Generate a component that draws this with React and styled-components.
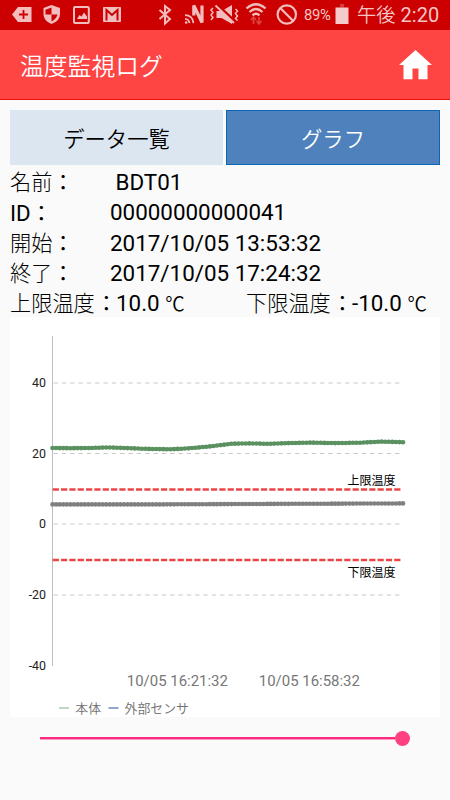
import React from 'react';
import styled, { createGlobalStyle } from 'styled-components';

const GlobalStyle = createGlobalStyle`
  body { margin: 0; background: #fafafa; }
  * { box-sizing: border-box; }
`;

const Screen = styled.div`
  width: 450px;
  height: 800px;
  overflow: hidden;
  background: #fafafa;
  color: #000;
  font-family: Roboto, 'Noto Sans CJK JP', sans-serif;
`;

const StatusBar = styled.div`
  height: 30px;
  background: #cc0000;
  color: #f5c6c6;
  display: flex;
  align-items: center;
  padding-left: 12px;
`;

const StatusIcon = styled.svg`
  display: block;
  flex: none;
  width: ${p => p.$w}px;
  height: 30px;
  margin-right: ${p => p.$gap}px;
  overflow: visible;
`;

const Battery = styled.span`
  width: 32px;
  font-size: 14.8px;
  line-height: 30px;
  letter-spacing: -0.3px;
  white-space: nowrap;
`;

const Clock = styled.span`
  display: flex;
  gap: 5px;
  font-size: 20px;
  line-height: 33px;
  white-space: nowrap;
`;

const Meridiem = styled.span`
  font-size: 19.3px;
  font-weight: 350;
`;

const AppBar = styled.header`
  height: 70px;
  background: #ff4444;
  border-bottom: 1px solid #f01010;
  display: flex;
  align-items: center;
  justify-content: space-between;
  padding: 0 18px 0 20px;
`;

const Title = styled.h1`
  margin: 4px 0 0;
  color: #fff;
  font-weight: 350;
  font-size: 23.8px;
  line-height: 34px;
`;

const HomeIcon = styled.svg`
  width: 33px;
  height: 30px;
  display: block;
`;

const Tabs = styled.div`
  display: flex;
  gap: 3px;
  padding: 10px 10px 0;
`;

const Tab = styled.button`
  width: ${p => (p.$active ? 214 : 213)}px;
  height: 55px;
  padding: 0 0 1px;
  border: ${p => (p.$active ? '1px solid #0b66b5' : '0')};
  background: ${p => (p.$active ? '#4f81bd' : '#dce6f1')};
  color: ${p => (p.$active ? '#fff' : '#000')};
  font-family: inherit;
  font-size: 21.3px;
  font-weight: 350;
`;

const Details = styled.dl`
  margin: 0;
  padding: 1px 10px 0;
`;

const DetailRow = styled.div`
  display: flex;
  height: 30.3px;
  line-height: 34px;
  font-size: 21.2px;
  white-space: nowrap;
`;

const Label = styled.dt`
  width: ${p => p.$w}px;
  flex: none;
  font-weight: 300;
`;

const Latin = styled.span`
  font-size: 22.3px;
  font-weight: 400;
`;

const Colon = styled.span`
  font-weight: 400;
  margin-left: ${p => p.$shift || 0}px;
`;

const Value = styled.dd`
  margin: 0;
  line-height: 32px;
  padding-left: ${p => p.$indent || 0}px;
  font-size: 22.4px;
`;

const LimitGroup = styled.div`
  display: flex;
  width: ${p => p.$w}px;
  flex: none;
`;

const Unit = styled.span`
  font-size: 19.5px;
  font-weight: 350;
`;

const ChartPanel = styled.section`
  width: 430px;
  height: 400px;
  margin: 0 10px;
  background: #fff;
`;

const ChartSvg = styled.svg`
  display: block;
  font-family: Roboto, 'Noto Sans CJK JP', sans-serif;
`;

const AxisText = styled.text`
  font-size: 12.4px;
  text-anchor: end;
  fill: #222;
`;

const TimeText = styled.text`
  font-size: 14.95px;
  fill: #777;
`;

const LimitText = styled.text`
  font-size: 12px;
  fill: #000;
`;

const LegendText = styled.text`
  font-size: 12.9px;
  font-weight: 350;
  fill: #707070;
`;

const Slider = styled.div`
  display: flex;
  align-items: center;
  width: 370px;
  height: 15px;
  margin: 14px 0 0 40px;
`;

const Track = styled.div`
  flex: 1;
  height: 3px;
  background: #ff2a80;
  border-bottom: 1px solid #ff9cc4;
`;

const Thumb = styled.div`
  width: 15px;
  height: 15px;
  border-radius: 50%;
  background: #ff4081;
`;

const ticks = [[40, 66], [20, 136.5], [0, 207], [-20, 278], [-40, 348.5]];

const outerCurve = [
  [42.5, 131], [60, 131.2], [80, 131], [98, 130.4], [112, 130.9], [135, 131.8],
  [160, 132.3], [178, 131.4], [200, 129.4], [222, 126.7], [240, 126.4],
  [258, 126.8], [275, 126.2], [300, 125.6], [325, 126.1], [350, 125.7],
  [372, 124.6], [393, 125.2],
];

const innerCurve = [[42.5, 187.4], [150, 187.4], [260, 186.9], [393, 186.4]];

function sample(curve) {
  const out = [];
  let s = 0;
  for (let i = 0; i <= 98; i += 1) {
    const x = 42.5 + i * (350.5 / 98);
    while (s < curve.length - 2 && x > curve[s + 1][0]) s += 1;
    const [x0, y0] = curve[s];
    const [x1, y1] = curve[s + 1];
    out.push([x, y0 + ((x - x0) / (x1 - x0)) * (y1 - y0)]);
  }
  return out;
}

function Series({ curve, color, dot }) {
  const pts = sample(curve);
  return (
    <g>
      <polyline points={pts.map(p => p.join(',')).join(' ')} fill="none" stroke={color} strokeWidth="3" />
      {pts.map(([x, y]) => <circle key={x} cx={x} cy={y} r="2.3" fill={dot} />)}
    </g>
  );
}

function Chart() {
  return (
    <ChartSvg width="430" height="400" viewBox="0 0 430 400">
      {ticks.map(([v, y]) => (
        <g key={v}>
          {v !== -40 && <line x1="43.5" x2="390.5" y1={y} y2={y} stroke="#c9c9c9" strokeWidth="1" strokeDasharray="4.4 3.93" />}
          <AxisText x="36" y={y + 4}>{v}</AxisText>
        </g>
      ))}
      <line x1="42.5" x2="42.5" y1="19" y2="349" stroke="#bdbdbd" />
      {[172.4, 243].map(y => (
        <line key={y} x1="42.7" x2="390.5" y1={y} y2={y} stroke="#ec4545" strokeWidth="2.5" strokeDasharray="6.2 2.13" />
      ))}
      <Series curve={outerCurve} color="#5f9364" dot="#5b9160" />
      <Series curve={innerCurve} color="#808080" dot="#808080" />
      <LimitText x="337.5" y="168.3">上限温度</LimitText>
      <LimitText x="337.5" y="260">下限温度</LimitText>
      <TimeText x="116.8" y="368.5">10/05 16:21:32</TimeText>
      <TimeText x="248.8" y="368.5">10/05 16:58:32</TimeText>
      <line x1="49" x2="59" y1="391" y2="391" stroke="#9fc2a3" strokeWidth="1.3" />
      <LegendText x="65.3" y="396">本体</LegendText>
      <line x1="98.5" x2="108.5" y1="391" y2="391" stroke="#5577ad" strokeWidth="1.3" />
      <LegendText x="114.5" y="396">外部センサ</LegendText>
    </ChartSvg>
  );
}

function StatusIcons() {
  const tint = '#f3bdbd';
  return (
    <>
      <StatusIcon $w={21} $gap={11} viewBox="0 0 21 30">
        <path d="M0 14.5 6 7h13.5v15H6z" fill={tint} />
        <path d="M11.5 10v9M7 14.5h9" stroke="#c00" strokeWidth="1.8" />
      </StatusIcon>
      <StatusIcon $w={17} $gap={13} viewBox="0 0 17 30">
        <path d="M7.5 5 16 8v6q0 7-8.5 10Q-.5 21-.5 14V8z" fill={tint} />
        <path d="M7.5 7.5v7h-6V9.7zM7.5 14.5v7q4.5-2 6-7z" fill="#c00" />
      </StatusIcon>
      <StatusIcon $w={17} $gap={13} viewBox="0 0 17 30">
        <rect x="0" y="7" width="14.8" height="16" rx="1" fill="none" stroke={tint} strokeWidth="2" />
        <path d="m3 19 2.5-4 2 1.5 2.5-4 3 4V19z" fill={tint} />
      </StatusIcon>
      <StatusIcon $w={18} $gap={37} viewBox="0 0 18 30">
        <rect x="-1" y="7" width="18" height="15" rx="1" fill={tint} />
        <path d="M2.5 20.5V10l5.5 5 5.5-5v10.5" fill="none" stroke="#c00" strokeWidth="2" />
      </StatusIcon>
      <StatusIcon $w={14} $gap={12} viewBox="0 0 14 30">
        <path d="m.5 10 10.5 9-5 4.5V6l5 4-10.5 9" fill="none" stroke={tint} strokeWidth="2" />
      </StatusIcon>
      <StatusIcon $w={20} $gap={6} viewBox="0 0 20 30">
        <path d="M8.8 15.5V5.5L17 22.500V5.500" fill="none" stroke={tint} strokeWidth="3.2" strokeLinejoin="bevel" />
        <path d="M0 15.200q7.500 0 8.500 8M0 19q4 0 4.500 4.200" fill="none" stroke={tint} strokeWidth="1.700" />
        <circle cx="1.200" cy="22.500" r="1.300" fill={tint} />
      </StatusIcon>
      <StatusIcon $w={30} $gap={6} viewBox="0 0 30 30">
        <path d="M5.5 11h5L21 5v19l-10.500-6h-5z" fill={tint} />
        <path d="m6 4.500 18 17" stroke="#c00" strokeWidth="3" />
        <path d="m4.500 5.500 18.500 17.500" stroke={tint} strokeWidth="1.9" />
        <path d="M2 8 0 10l2 2.500L0 15l2 2.500L0 20M24.500 9l2 2-2 2.500 2 2.500-2 2.500 2 2" fill="none" stroke={tint} strokeWidth="1.5" />
      </StatusIcon>
      <StatusIcon $w={21} $gap={9} viewBox="0 0 21 30">
        <path d="M-.5 8.500q9.500-8.500 19 0M2.500 12q6.500-6 13 0M5.500 15.300q3.500-3 7 0" fill="none" stroke={tint} strokeWidth="2.3" />
        <path d="M6.500 24v-7m-2.500 3 2.500-3 2.500 3M12 17v7m-2.500-3 2.500 3 2.500-3" fill="none" stroke="#e04040" strokeWidth="1.7" />
      </StatusIcon>
      <StatusIcon $w={22} $gap={5} viewBox="0 0 22 30">
        <circle cx="9.800" cy="14.500" r="9.200" fill="none" stroke={tint} strokeWidth="2.2" />
        <path d="m3.300 8 13 13" stroke={tint} strokeWidth="2.2" />
      </StatusIcon>
      <Battery>89%</Battery>
      <StatusIcon $w={14} $gap={7} viewBox="0 0 14 30">
        <path d="M4 4h4v3.500H4z" fill="#d84040" />
        <path d="M-.5 7.500h13V24h-13z" fill="#f5caca" />
      </StatusIcon>
    </>
  );
}

export default function App() {
  return (
    <Screen>
      <GlobalStyle />
      <StatusBar>
        <StatusIcons />
        <Clock><Meridiem>午後</Meridiem><span>2:20</span></Clock>
      </StatusBar>
      <AppBar>
        <Title>温度監視ログ</Title>
        <HomeIcon viewBox="0 0 33 30">
          <path d="M16.500 0 33 15h-4.500v14.300h-9V18.500h-6v10.800H4.500V15H0z" fill="#fff" />
        </HomeIcon>
      </AppBar>
      <Tabs>
        <Tab>データ一覧</Tab>
        <Tab $active>グラフ</Tab>
      </Tabs>
      <Details>
        <DetailRow><Label $w={100}>名前<Colon>：</Colon></Label><Value $indent={5.5}>BDT01</Value></DetailRow>
        <DetailRow><Label $w={100}><Latin>ID</Latin><Colon>：</Colon></Label><Value>00000000000041</Value></DetailRow>
        <DetailRow><Label $w={100}>開始<Colon>：</Colon></Label><Value>2017/10/05 13:53:32</Value></DetailRow>
        <DetailRow><Label $w={100}>終了<Colon>：</Colon></Label><Value>2017/10/05 17:24:32</Value></DetailRow>
        <DetailRow>
          <LimitGroup $w={236}>
            <Label $w={106}>上限温度<Colon $shift={1}>：</Colon></Label><Value>10.0 <Unit>℃</Unit></Value>
          </LimitGroup>
          <LimitGroup $w={194}>
            <Label $w={106}>下限温度<Colon $shift={1}>：</Colon></Label><Value>-10.0 <Unit>℃</Unit></Value>
          </LimitGroup>
        </DetailRow>
      </Details>
      <ChartPanel><Chart /></ChartPanel>
      <Slider><Track /><Thumb /></Slider>
    </Screen>
  );
}
